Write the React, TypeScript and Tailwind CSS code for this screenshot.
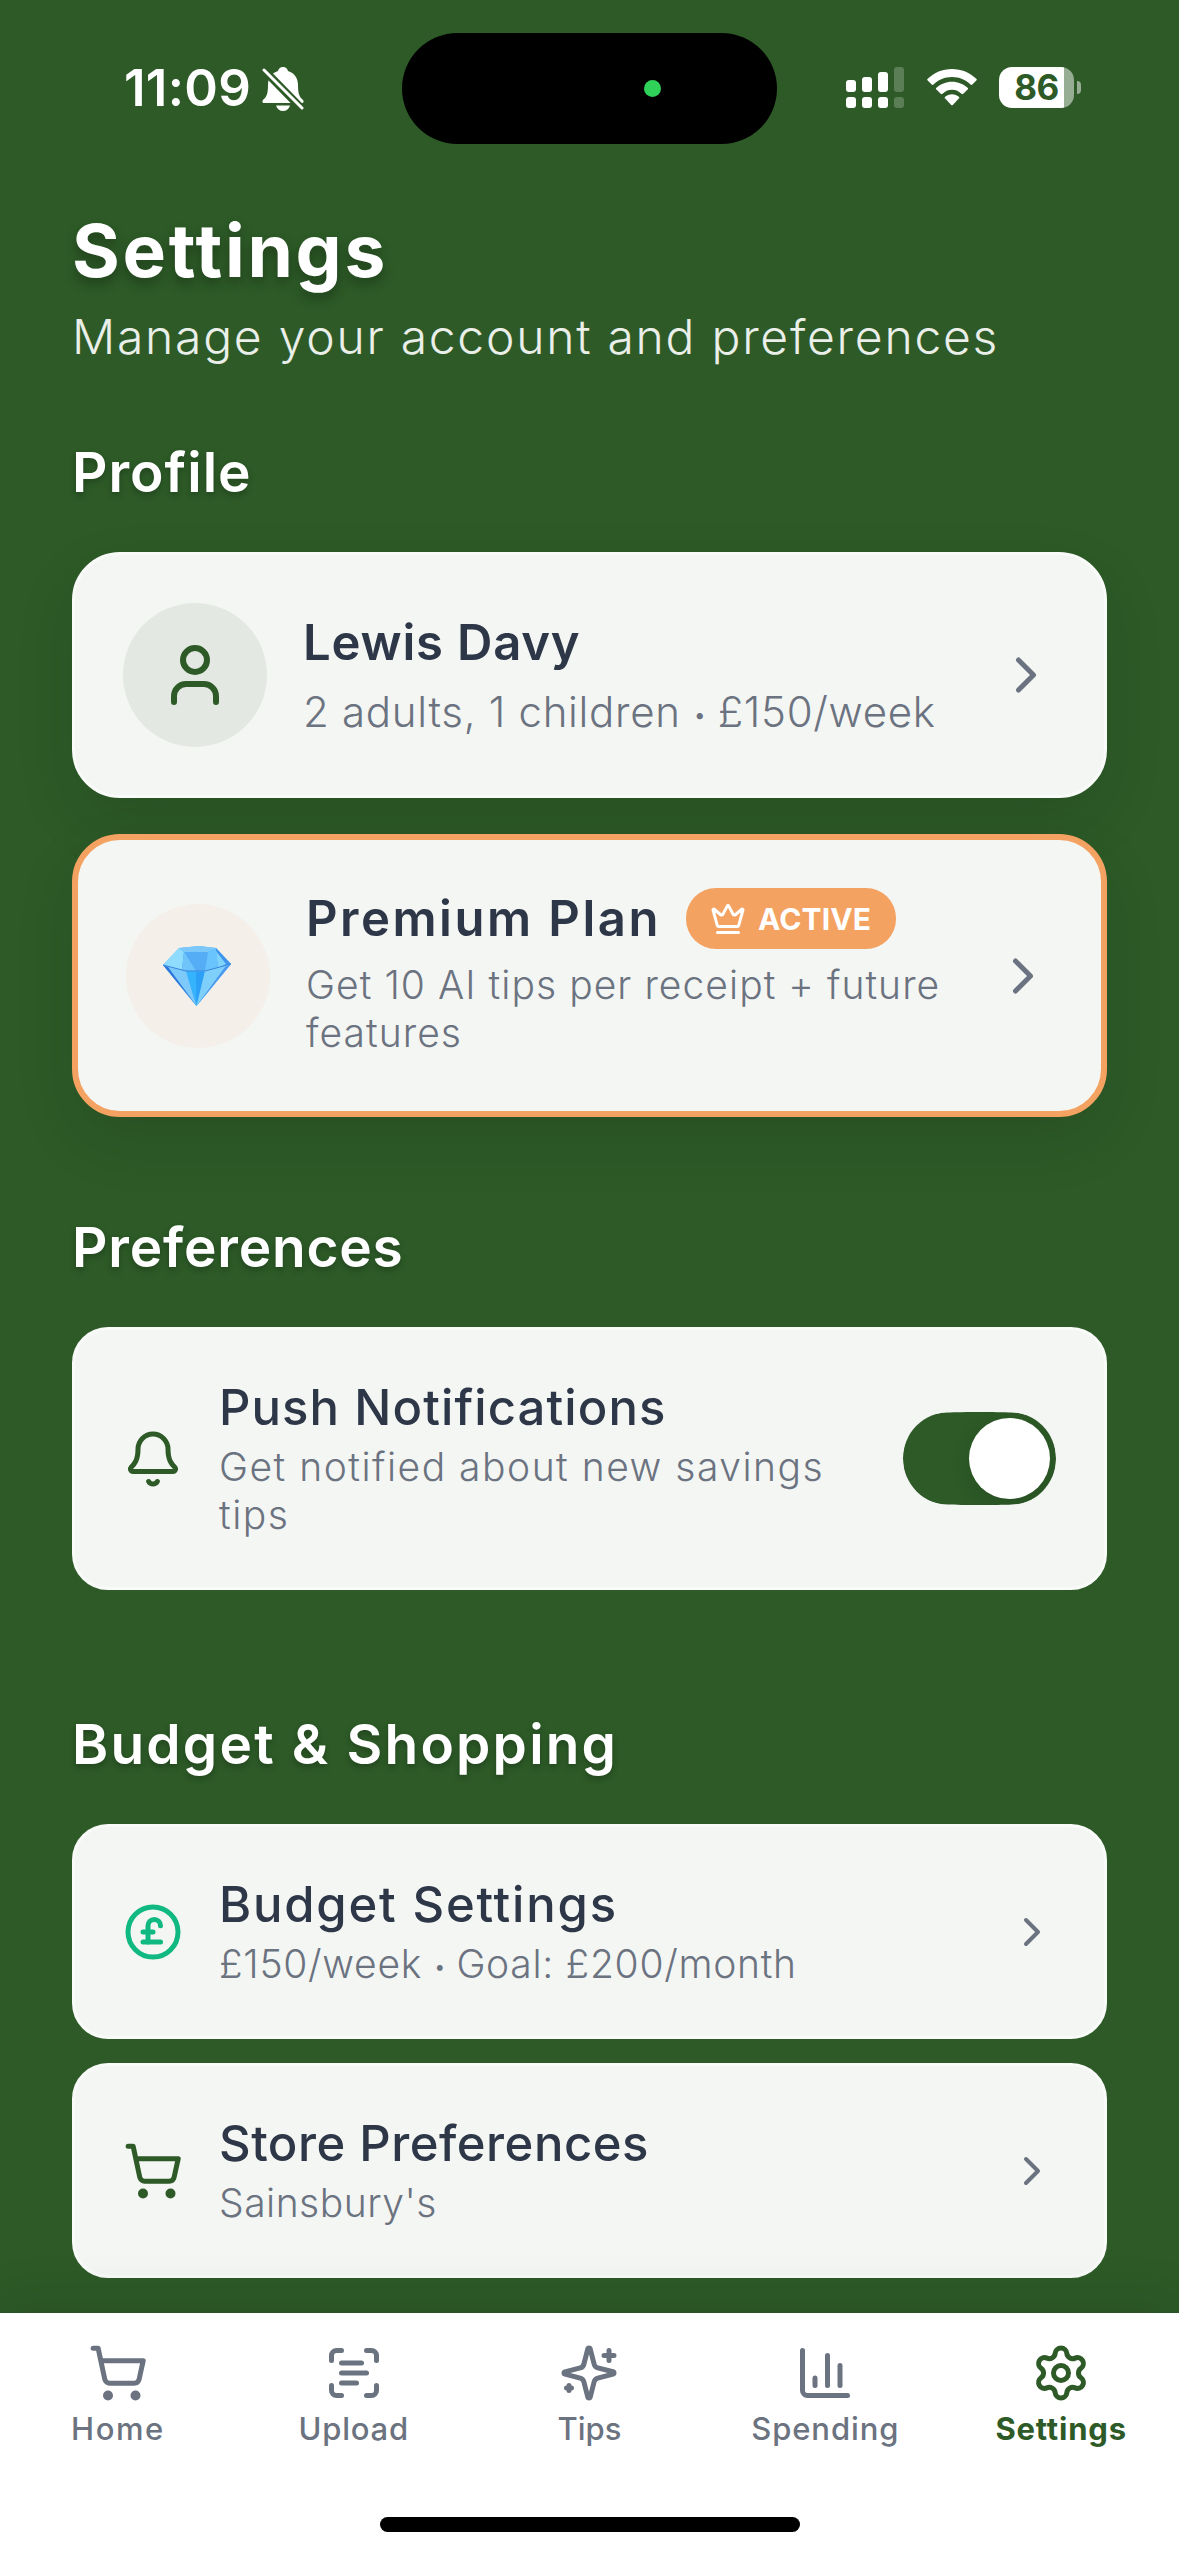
import type { ReactNode } from 'react'
import { Bell, ChartColumn, ChevronRight, CirclePoundSterling, Crown, ScanText, Settings, User } from 'lucide-react'
import clsx from 'clsx'

const Cart = ({ className }: { className?: string }) => (
  <svg viewBox="0 0 24 24" fill="none" stroke="currentColor" strokeWidth="2" strokeLinecap="round" strokeLinejoin="round" className={className}>
    <circle cx="8" cy="21" r="1" />
    <circle cx="19" cy="21" r="1" />
    <path d="M2.05 2.05h2l2.66 12.42a2 2 0 0 0 2 1.58h9.78a2 2 0 0 0 1.95-1.57l1.65-7.43H5.12" />
  </svg>
)

const Sparkles = ({ className }: { className?: string }) => (
  <svg viewBox="0 0 24 24" fill="none" stroke="currentColor" strokeWidth="2" strokeLinecap="round" strokeLinejoin="round" className={className}>
    <path d="M9.937 15.5A2 2 0 0 0 8.5 14.063l-6.135-1.582a.5.5 0 0 1 0-.962L8.5 9.936A2 2 0 0 0 9.937 8.5l1.582-6.135a.5.5 0 0 1 .963 0L14.063 8.5A2 2 0 0 0 15.5 9.937l6.135 1.581a.5.5 0 0 1 0 .964L15.5 14.063a2 2 0 0 0-1.437 1.437l-1.582 6.135a.5.5 0 0 1-.963 0z" />
    <path d="M20 3v4M22 5h-4M4 17v2M5 18H3" />
  </svg>
)

const Diamond = () => (
  <svg viewBox="0 0 70 60" className="mr-[3px] h-[60px] w-[70px]">
    <path d="M1 19 17 2 37 0 54 2 69 18 34.500 60Z" fill="#4db4fb" />
    <path d="M1 19 17 2 22 6 20 24Z" fill="#8fdcff" />
    <path d="M17 2 37 0 54 2 46 6H22Z" fill="#7cc8fb" />
    <path d="M22 6H46L43 25H25L20 24Z" fill="#55aef5" />
    <path d="M46 6 54 2 56 22 43 25Z" fill="#69c3fd" />
    <path d="M54 2 69 18 56 22Z" fill="#3f93ea" />
    <path d="M54 5 64 18 56 22Z" fill="#7fd3fb" />
    <path d="M22 6 20 24 34 25Z" fill="#6fc5fa" />
    <path d="M1 19 24 25 34.500 60Z" fill="#7cc9fa" />
    <path d="M1 19 34.500 60 6 21Z" fill="#2b74d8" />
    <path d="M24 25H43L34.500 60Z" fill="#35b4fd" />
    <path d="M34 26H43L34.500 60Z" fill="#2ba0f6" />
    <path d="M69 18 43 25 34.500 60Z" fill="#7ed0fb" />
    <path d="M69 18 34.500 60 63 21Z" fill="#4a98ee" />
    <path d="M1 19 24 25H43L69 18" fill="none" stroke="#3a86dc" strokeWidth="1" />
  </svg>
)

const StatusBar = () => (
  <div className="relative h-[177px] text-white">
    <div className="flex h-[177px] items-start justify-between">
      <div className="flex pl-[124px] pt-[57px]">
        <span className="w-[138px] text-[51px] font-semibold leading-[62px] tracking-[0.3px]">11:09</span>
        <svg viewBox="0 0 42 44" className="mt-[10px] h-[44px] w-[42px]" fill="currentColor">
          <path d="M21 0c3 0 4.500 1.800 5 4 6.500 2 10 7 10 14 0 9 1.500 12 5 15 1 1 .8 3-1 3H2c-1.800 0-2-2-1-3 3.500-3 5-6 5-15C6 11 9.500 6 16 4c.5-2.200 2-4 5-4Z" />
          <path d="M14 38.500h14c-1 3.500-3.500 5.500-7 5.500s-6-2-7-5.500Z" />
          <path d="M0 1 41 43" stroke="#2d5a27" strokeWidth="8" />
          <path d="M2 3 40 41" stroke="currentColor" strokeWidth="3" strokeLinecap="round" />
        </svg>
      </div>
      <div className="flex pr-[98px] pt-[67px]">
        <svg viewBox="0 0 58 41" className="h-[41px] w-[58px]" fill="currentColor">
          <rect x="0" y="13" width="10" height="12" rx="3" />
          <rect x="16" y="10" width="10" height="15" rx="3" />
          <rect x="32" y="5" width="10" height="20" rx="3" />
          <rect x="48" y="0" width="10" height="25" rx="3" opacity=".22" />
          <rect x="0" y="30" width="10" height="11" rx="3" />
          <rect x="16" y="30" width="10" height="11" rx="3" />
          <rect x="32" y="30" width="10" height="11" rx="3" />
          <rect x="48" y="30" width="10" height="11" rx="3" opacity=".22" />
        </svg>
        <svg viewBox="0 0 50 37" className="ml-[23px] mt-[2px] h-[37px] w-[50px]" fill="currentColor">
          <path d="M25 0C34.500 0 43 3.700 49.300 9.800c.7.700.7 1 0 1.700l-4 4c-.6.600-1.200.6-1.800 0C38.500 10.700 32.300 8 25 8S11.500 10.700 6.500 15.500c-.6.600-1.200.6-1.800 0l-4-4c-.7-.7-.7-1 0-1.700C7 3.700 15.500 0 25 0Z" />
          <path d="M25 12.700c6 0 11.500 2.300 15.600 6.100.7.600.7 1 0 1.700l-4.300 4.200c-.6.600-1.200.6-1.800.1C32 22.300 29 20.700 25 20.700s-7 1.600-9.500 4.100c-.6.500-1.200.5-1.800-.1l-4.300-4.200c-.7-.7-.7-1.100 0-1.700C13.500 15 19 12.700 25 12.700Z" />
          <path d="M25 25.200c2.600 0 5 .9 6.800 2.500.7.600.7 1.200 0 1.900l-6 6.300c-.6.600-1 .6-1.600 0l-6-6.300c-.7-.7-.7-1.300 0-1.900 1.800-1.600 4.200-2.500 6.800-2.500Z" />
        </svg>
        <div className="ml-[22px] flex h-[41px] w-[75px] items-center justify-center rounded-[13px] bg-linear-to-r from-white from-87% to-white/50 to-87%">
          <span className="text-[35px] font-bold leading-[41px] tracking-[-0.5px] text-[#2d5a27]">86</span>
        </div>
        <div className="ml-[3px] mt-[14px] h-[13px] w-[4px] rounded-r-full bg-white/50" />
      </div>
    </div>
    <div className="absolute left-[402px] top-[33px] h-[111px] w-[375px] rounded-full bg-black">
      <div className="absolute left-[242px] top-[47px] size-[17px] rounded-full bg-[#30d158]" />
    </div>
  </div>
)

const SectionTitle = ({ children, className }: { children: ReactNode; className: string }) => (
  <h2 className={clsx('text-[55px] font-semibold leading-[66px] text-white [text-shadow:0_3px_6px_rgba(0,0,0,0.25)]', className)}>
    {children}
  </h2>
)

const Dot = () => <span className="align-[4px] text-[0.55em] leading-none tracking-[-1px]">•</span>

interface RowProps {
  icon: ReactNode
  title: string
  titleClass: string
  children: ReactNode
  action?: ReactNode
}

const SettingRow = ({ icon, title, titleClass, children, action }: RowProps) => (
  <div className="flex items-center rounded-[36px] border-[3px] border-[#f9fbf9] bg-[#f4f6f3] p-[48px]">
    {icon}
    <div className="ml-[36px] flex-1 whitespace-nowrap">
      <h3 className={clsx('mb-[6px] text-[49px] font-medium leading-[59px] text-[#2d3748]', titleClass)}>{title}</h3>
      {children}
    </div>
    {action ?? <ChevronRight className="size-[48px] text-[#6b7280]" />}
  </div>
)

const Toggle = () => (
  <div className="relative h-[93px] w-[153px] overflow-hidden rounded-full">
    <svg viewBox="0 0 153 93" className="h-[93px] w-[153px]">
      <path d="M0 46.500C0 17 20 1 44 .6 60-.2 93-.2 109 .6 133 1 153 17 153 46.500S133 92 109 92.400C93 93.200 60 93.200 44 92.400 20 92 0 76 0 46.500Z" fill="#2d5a27" />
    </svg>
    <div className="absolute right-[6px] top-[6px] size-[81px] rounded-full bg-white shadow-[0_6px_20px_rgba(0,0,0,0.12)]" />
  </div>
)

const tabs = [
  { label: 'Home', Icon: Cart, className: 'tracking-[1.5px]' },
  { label: 'Upload', Icon: ScanText, className: 'tracking-[0.8px]' },
  { label: 'Tips', Icon: Sparkles, className: 'tracking-[0px]' },
  { label: 'Spending', Icon: ChartColumn, className: 'tracking-[0.9px]' },
  { label: 'Settings', Icon: Settings, className: 'tracking-[0.8px]', active: true }
]

export default function App() {
  return (
    <div className="flex h-[2556px] w-[1179px] flex-col overflow-hidden bg-[#2d5a27] font-['Inter','Liberation_Sans',sans-serif]">
      <StatusBar />

      <main className="flex-1 px-[72px] pt-[30px]">
        <h1 className="text-[73px] font-bold leading-[88px] tracking-[2.7px] text-white [text-shadow:0_6px_12px_rgba(0,0,0,0.3)]">Settings</h1>
        <p className="mt-[12px] whitespace-nowrap text-[48px] font-light leading-[59px] tracking-[1.75px] text-white/90">
          Manage your account and preferences
        </p>

        <SectionTitle className="mt-[73px] tracking-[1px]">Profile</SectionTitle>
        <div className="mt-[47px] flex h-[246px] items-center rounded-[48px] border-[3px] border-[#f9fbf9] bg-[#f4f6f3] px-[48px] shadow-[0_24px_60px_rgba(0,0,0,0.1)]">
          <div className="flex size-[144px] items-center justify-center rounded-full bg-[#e3e8e2]">
            <User className="size-[72px] text-[#2d5a27]" />
          </div>
          <div className="ml-[36px] flex-1 whitespace-nowrap">
            <h3 className="mb-[14px] text-[49px] font-semibold leading-[59px] tracking-[0.8px] text-[#2d3748]">Lewis Davy</h3>
            <p className="h-[51px] text-[42px] font-light leading-[51px] tracking-[0.7px] text-[#6b7280]">
              2 adults, 1 children <Dot /> £150/week
            </p>
          </div>
          <ChevronRight className="size-[60px] text-[#6b7280]" />
        </div>

        <div className="mt-[36px] flex h-[283px] items-center rounded-[48px] border-[6px] border-[#f4a261] bg-[#f4f6f3] px-[48px] shadow-[0_24px_60px_rgba(0,0,0,0.1)]">
          <div className="flex size-[144px] items-center justify-center rounded-full bg-[#f4efe8]">
            <Diamond />
          </div>
          <div className="ml-[36px] flex-1 whitespace-nowrap pb-[6px]">
            <div className="mb-[12px] flex items-center">
              <h3 className="w-[380px] text-[49px] font-semibold leading-[59px] tracking-[2.5px] text-[#2d3748]">Premium Plan</h3>
              <div className="flex h-[61px] w-[210px] items-center rounded-[30px] bg-[#f4a261] pl-[24px] text-white">
                <Crown className="size-[36px]" />
                <span className="ml-[12px] text-[30px] font-bold leading-[36px] tracking-[0.1px]">ACTIVE</span>
              </div>
            </div>
            <p className="text-[39px] font-light leading-[48px] tracking-[1.05px] text-[#6b7280]">
              Get 10 AI tips per receipt + future
              <br />
              features
            </p>
          </div>
          <ChevronRight className="size-[60px] text-[#6b7280]" />
        </div>

        <SectionTitle className="mt-[97px] tracking-[0.8px]">Preferences</SectionTitle>
        <div className="mt-[47px]">
          <SettingRow
            icon={<Bell className="size-[60px] text-[#2d5a27]" />}
            title="Push Notifications"
            titleClass="tracking-[1.1px]"
            action={<Toggle />}
          >
            <p className="text-[39px] font-light leading-[48px] tracking-[1.5px] text-[#6b7280]">
              Get notified about new savings
              <br />
              tips
            </p>
          </SettingRow>
        </div>

        <SectionTitle className="mt-[121px] tracking-[2.2px]">Budget &amp; Shopping</SectionTitle>
        <div className="mt-[47px] flex flex-col gap-[24px]">
          <SettingRow
            icon={<CirclePoundSterling className="size-[60px] text-[#10b981]" />}
            title="Budget Settings"
            titleClass="tracking-[1.8px]"
          >
            <p className="h-[48px] text-[39px] font-light leading-[48px] tracking-[0.7px] text-[#6b7280]">
              £150/week <Dot /> Goal: £200/month
            </p>
          </SettingRow>
          <SettingRow icon={<Cart className="size-[60px] text-[#2d5a27]" />} title="Store Preferences" titleClass="tracking-[0.5px]">
            <p className="text-[39px] font-light leading-[48px] tracking-[0.5px] text-[#6b7280]">Sainsbury's</p>
          </SettingRow>
        </div>
      </main>

      <nav className="relative flex h-[243px] flex-col items-center bg-white shadow-[0_-12px_48px_rgba(0,0,0,0.1)]">
        <div className="grid w-full grid-cols-5 pt-[30px]">
          {tabs.map(({ label, Icon, className, active }) => (
            <div key={label} className={clsx('flex flex-col items-center', active ? 'text-[#2d5a27]' : 'text-[#6b7280]')}>
              <Icon className="size-[60px]" />
              <span className={clsx('mt-[7px] text-[31px] leading-[37px]', active ? 'font-bold' : 'font-medium', className)}>{label}</span>
            </div>
          ))}
        </div>
        <div className="mt-[70px] h-[15px] w-[420px] rounded-full bg-black" />
      </nav>
    </div>
  )
}
